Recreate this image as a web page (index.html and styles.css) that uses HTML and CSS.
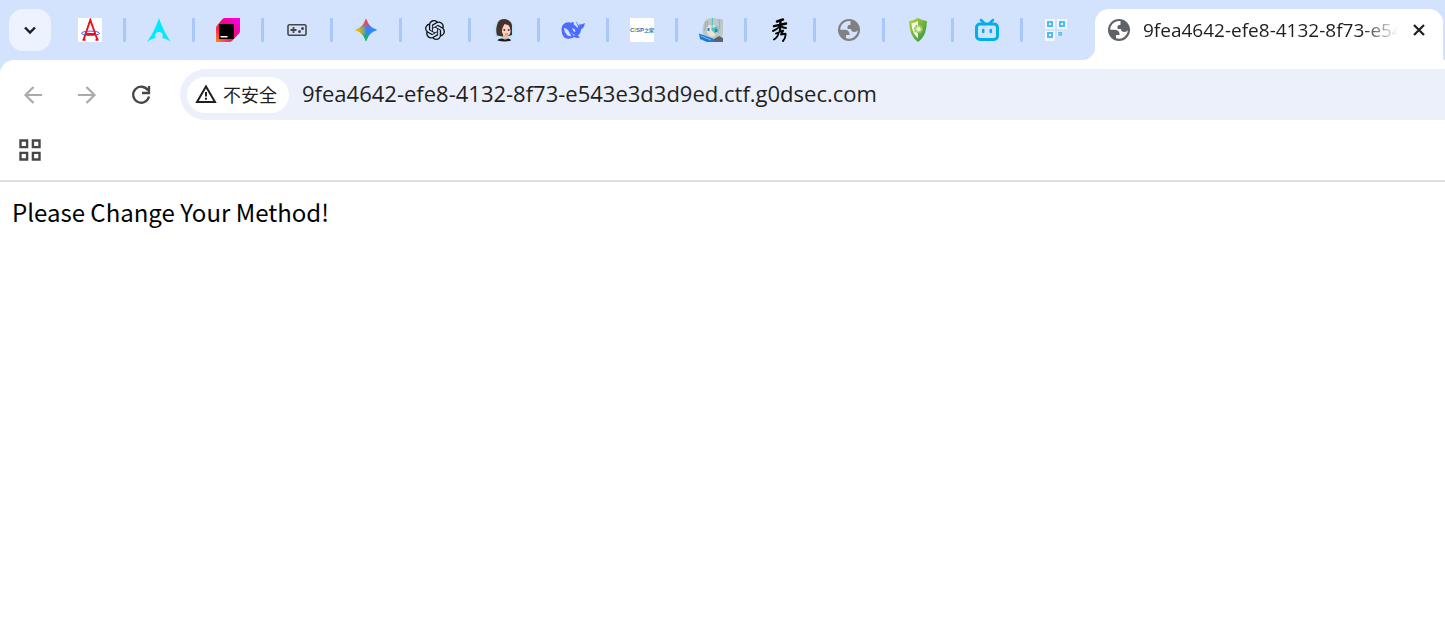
FILE: index.html
```html
<!DOCTYPE html>
<html lang="zh-CN">
<head>
<meta charset="utf-8">
<title>9fea4642-efe8-4132-8f73-e543e3d3d9ed.ctf.g0dsec.com</title>
<link rel="stylesheet" href="styles.css">
</head>
<body>
<svg class="defs" aria-hidden="true">
  <symbol id="globe" viewBox="0 0 24 24">
    <circle cx="12" cy="12" r="11" fill="currentColor"/>
    <path fill="var(--sea)" d="M13.500 3Q8 2.500 5 6.500 3 9 3.200 11.800H7.500Q12 12 12.500 15.500V17H9V20.300Q15.500 22 19.200 16.800 20.600 14.800 20.900 12.300 19.800 13.800 17.500 14 14 14 14 11H10.500V8.500Q10.500 7 13.500 6.800Z"/>
  </symbol>
</svg>
<header class="browser">
  <div class="strip">
    <button class="search" aria-label="搜索标签页"><svg viewBox="0 0 14 14" width="14" height="14"><path d="M2 4.500 7 9.500 12 4.500" fill="none" stroke="#1b1c20" stroke-width="2.400"/></svg></button>
    <nav class="tabs">
      <a class="tab" href="#" aria-label="Tab 1"><svg class="icon" viewBox="0 0 24 24"><path fill="#fff" d="M0 0h24v24H0z"/><path d="M5.500 22 12.300 2 19.500 22M8 16h9M4.500 21.800h3M17.500 21.800h3" fill="none" stroke="#f10b12" stroke-width="1.900"/><ellipse cx="12.500" cy="15.300" rx="9" ry="2.200" fill="none" stroke="#5454dc" stroke-width="1"/></svg></a>
      <a class="tab" href="#" aria-label="Tab 2"><svg class="icon" viewBox="0 0 24 24"><path fill="#00eaff" d="M12 0c2.300 7 6 15.500 12 24-3.500-2.700-6-3.500-8.500-4 1-4-.8-6-3.500-6s-4.500 2-3.500 6C6 20.500 3.500 21.300 0 24 6 15.500 9.700 7 12 0Z"/></svg></a>
      <a class="tab" href="#" aria-label="Tab 3"><svg class="icon" viewBox="0 0 24 24"><defs><linearGradient id="jb" x1="0" y1="1" x2="1" y2="0"><stop offset="0" stop-color="#ff8a12"/><stop offset=".3" stop-color="#ff2857"/><stop offset=".55" stop-color="#f80085"/><stop offset="1" stop-color="#f500ff"/></linearGradient></defs><path fill="url(#jb)" d="M9 0h15v13q0 1.500-1 2.500l-7 7.500q-1 1-2.500 1H0V10q0-1.500 1-2.500L6.500 1Q7.500 0 9 0Z"/><path d="M3 6h15v15H3z"/><path fill="#fff" d="M4.500 18h7v1.500h-7z"/></svg></a>
      <a class="tab" href="#" aria-label="Tab 4"><svg class="icon" viewBox="0 0 24 24"><rect x="3" y="6.700" width="18" height="10.600" rx="1.500" fill="none" stroke="#474747" stroke-width="1.600"/><path d="M8.500 9v6M5.500 12h6" stroke="#474747" stroke-width="1.800"/><circle cx="14.500" cy="13.400" r="1.500" fill="#474747"/><circle cx="17.500" cy="10.600" r="1.500" fill="#474747"/></svg></a>
      <a class="tab" href="#" aria-label="Tab 5"><svg class="icon" viewBox="0 0 24 24"><defs><linearGradient id="g1" x1="0" y1="0" x2="1" y2="0"><stop offset=".05" stop-color="#fbbc04"/><stop offset=".38" stop-color="#90a85e"/><stop offset=".52" stop-color="#3186ff"/></linearGradient><linearGradient id="g2" x1="0" y1="0" x2="0" y2="1"><stop offset=".08" stop-color="#f9434d"/><stop offset=".25" stop-color="#f9434d" stop-opacity=".7"/><stop offset=".45" stop-color="#3186ff" stop-opacity="0"/><stop offset=".62" stop-color="#08b962" stop-opacity="0"/><stop offset=".85" stop-color="#08b962"/></linearGradient></defs><path fill="url(#g1)" stroke="url(#g1)" stroke-width=".8" d="M12 1.500Q14.500 9.500 22.500 12 14.500 14.500 12 22.500 9.500 14.500 1.500 12 9.500 9.500 12 1.500Z"/><path fill="url(#g2)" stroke="url(#g2)" stroke-width=".8" d="M12 1.500Q14.500 9.500 22.500 12 14.500 14.500 12 22.500 9.500 14.500 1.500 12 9.500 9.500 12 1.500Z"/></svg></a>
      <a class="tab" href="#" aria-label="Tab 6"><svg class="icon knot" viewBox="0 0 24 24"><path fill="#0c1116" d="M22.282 9.821a5.985 5.985 0 0 0-.516-4.911 6.046 6.046 0 0 0-6.510-2.900A6.065 6.065 0 0 0 4.981 4.182a5.985 5.985 0 0 0-3.998 2.900 6.046 6.046 0 0 0 .743 7.097 5.980 5.980 0 0 0 .511 4.911 6.051 6.051 0 0 0 6.515 2.900A5.985 5.985 0 0 0 13.260 24a6.056 6.056 0 0 0 5.772-4.206 5.990 5.990 0 0 0 3.998-2.900 6.056 6.056 0 0 0-.748-7.073zM13.260 22.430a4.476 4.476 0 0 1-2.876-1.040l.141-.081 4.779-2.758a.795.795 0 0 0 .393-.681v-6.737l2.020 1.169a.071.071 0 0 1 .038.052v5.583a4.504 4.504 0 0 1-4.495 4.493zM3.600 18.304a4.471 4.471 0 0 1-.535-3.014l.142.085 4.783 2.759a.771.771 0 0 0 .781 0l5.843-3.369v2.332a.080.080 0 0 1-.033.062L9.740 19.950a4.499 4.499 0 0 1-6.140-1.646zM2.341 7.896a4.485 4.485 0 0 1 2.366-1.973V11.600a.766.766 0 0 0 .388.677l5.814 3.354-2.020 1.169a.076.076 0 0 1-.071 0l-4.830-2.787A4.504 4.504 0 0 1 2.341 7.872zm16.597 3.855-5.833-3.387L15.119 7.200a.076.076 0 0 1 .071 0l4.830 2.791a4.494 4.494 0 0 1-.676 8.105v-5.678a.790.790 0 0 0-.406-.667zm2.010-3.023-.141-.085-4.774-2.782a.776.776 0 0 0-.785 0L9.409 9.230V6.897a.066.066 0 0 1 .028-.061l4.830-2.787a4.499 4.499 0 0 1 6.681 4.660zM8.307 12.863l-2.020-1.164a.080.080 0 0 1-.038-.057V6.075a4.499 4.499 0 0 1 7.376-3.454l-.142.081-4.778 2.758a.795.795 0 0 0-.393.682zm1.097-2.366 2.602-1.500 2.607 1.500v3l-2.597 1.500-2.607-1.500z"/></svg></a>
      <a class="tab" href="#" aria-label="Tab 7"><svg class="icon" viewBox="0 0 24 24"><circle cx="12" cy="12" r="11" fill="#bfe5f5"/><path d="M8 2q4-2 8 0 4 2 4 6v9l-7 2-8-1.500Q3.500 12 5 7 5.500 3.500 8 2Z" fill="#44322f"/><path d="M12.500 6q-3 5-2.500 8 1 4 4 4.500 4-.5 4.500-4.500.5-5-2.500-7-2-.5-3.500-1Z" fill="#ffd2bd"/><path d="M11 17h5v4h-5z" fill="#efb8a6"/><path d="M5.500 22.500Q6 20.500 10.500 20.500q2.500 2 5.500 0 3 .5 3 2-6 2-13.500 0Z" fill="#15171c"/><circle cx="12.300" cy="12" r="1" fill="#4b302d"/><circle cx="16.700" cy="12" r="1" fill="#4b302d"/><path d="M13 16h3" stroke="#db5a5a"/></svg></a>
      <a class="tab" href="#" aria-label="Tab 8"><svg class="icon" viewBox="0 0 24 24"><path fill="#4d6bfe" d="M15.500 3.300Q16.500 7 18.500 8.200 18 4.500 19.300 6.200 20 7 23.800 5 23.600 9.700 20.300 11 20 15 16.800 17.700q1.700.8 2 1.800-2.800 1-5.500-.5-5.500 3.500-10.300.3Q.5 16.500.5 11.500.5 7 4.500 4.800q3-1.300 6 0Q12 3.500 13 4.700l-.5 1.500q3 2 4.200 4 .6-2-.3-3.200-1.500-1.700-.9-3.700Z"/><path fill="#d3e3fd" d="M2.800 10Q3.300 14.500 6 17q2 1.800 4.500 1-1.500-2-2.500-4.500-2-3.500-5.200-3.500ZM11 10.500q1 2.500 3 3.800.8-1.300-.2-2.800-1-1.300-2.800-1ZM10 14q1.500 2.500 4 3l-1 .8q-2-1-3-3.800Z"/></svg></a>
      <a class="tab" href="#" aria-label="Tab 9"><span class="cisp"><b>C<i>I</i>SP</b><em>之家</em></span></a>
      <a class="tab" href="#" aria-label="Tab 10"><svg class="icon" viewBox="0 0 24 24"><path fill="#bdc8ca" d="M8 1q6-2 11 0h5v15l-2 6H7Q3 17 3.500 11 4 4 8 1Z"/><path fill="#f0dfda" d="M8 8q5-2 9 0l1 5q-1 5-5 6-4-1-5-5Z"/><path fill="#42c5c3" d="M13 0h1l-.500 10 5-2v4l-2 4-4-4Z"/><path d="M20 1q2 7-1 14M7 3 5.500 13M9 3 8 9" stroke="#98acaf" fill="none"/><path fill="#3381ac" d="M8.500 10h2v3h-2zM16 11h2.500v3H16z"/><path fill="#207bd5" d="M0 15.500 7 18l8 3 1 3H8l-7-3Z"/><path fill="#596372" d="m15 21 5-3 4 2v4h-9Z"/><path d="m2 18 10 4" stroke="#60c9f2"/></svg></a>
      <a class="tab" href="#" aria-label="Tab 11"><svg class="icon" viewBox="0 0 24 24"><g fill="none" stroke="#050505" stroke-linecap="round" stroke-linejoin="round"><path stroke-width="2.400" d="M15 1.500 9 3.500M6 8.200 18 5.500M12.500 3 12 13"/><path stroke-width="1.900" d="M12 8Q9 11.500 5 13M13 8q2 2 5 2M8 15.500 15 12.500M10.500 15Q10 19 6 21.500M15 13l-2 3.500 4.500-.8q.5 4-2.500 7.300"/></g></svg></a>
      <a class="tab muted" href="#" aria-label="Tab 12"><svg class="icon"><use href="#globe"/></svg></a>
      <a class="tab" href="#" aria-label="Tab 13"><svg class="icon" viewBox="0 0 24 24"><defs><linearGradient id="sh" x1="0" y1="0" x2="1" y2="1"><stop stop-color="#b9d832"/><stop offset="1" stop-color="#239248"/></linearGradient></defs><path fill="url(#sh)" d="M12 0q4 2.500 9 3-.3 7-1.800 11.500Q17 20.500 12 24q-5-3.500-7.200-9.500Q3.300 10 3 3q5-.5 9-3Z"/><path fill="#f5fbe9" d="M12 3v17.500Q5.800 15 5.500 5.300 9 5 12 3Z"/><circle cx="12.500" cy="11" r="3.500" fill="#d5e8a8" stroke="#8fc456" stroke-width="2.200" stroke-dasharray="1.800 .8"/><circle cx="12.500" cy="11" r="1.700" fill="#edf7cc"/></svg></a>
      <a class="tab" href="#" aria-label="Tab 14"><svg class="icon" viewBox="0 0 24 24"><g fill="none" stroke="#00aeec" stroke-linecap="round"><rect x="1.500" y="6" width="21" height="15.500" rx="3.500" stroke-width="3"/><path stroke-width="2.500" d="m6 2 3 3M18 2l-3 3M8.200 12v2M15.800 12v2"/></g></svg></a>
      <a class="tab" href="#" aria-label="Tab 15"><svg class="icon" viewBox="0 0 24 24"><path fill="#f3f7ff" d="M1 1h10v10H1zM13 1h10v10H13zM1 13h10v10H1zM13 13h6v5h-6z"/><path fill="none" stroke="#4fbdf1" stroke-width="2" d="M4 4h4v4H4zM16 4h4v4h-4zM4 15h4v4H4z"/><path fill="none" stroke="#4fbdf1" stroke-width="1.500" d="M15 14.500h2.500V17H15z"/></svg></a>
    </nav>
    <div class="active">
      <svg class="icon" aria-hidden="true"><use href="#globe"/></svg>
      <span class="title">9fea4642-efe8-4132-8f73-e54</span>
      <button class="close" aria-label="关闭"><svg viewBox="0 0 14 14" width="14" height="14"><path d="m2 2 10 10M12 2 2 12" stroke="#1f1f1f" stroke-width="2.200"/></svg></button>
    </div>
  </div>
  <div class="toolbar">
    <div class="nav">
      <button aria-label="后退" disabled><svg class="icon" viewBox="0 0 24 24"><path d="M21 12H4.500M12.500 4 4.500 12l8 8" fill="none" stroke="#ababab" stroke-width="2.200"/></svg></button>
      <button aria-label="前进" disabled><svg class="icon" viewBox="0 0 24 24"><path d="M3 12h16.500M11.500 4l8 8-8 8" fill="none" stroke="#ababab" stroke-width="2.200"/></svg></button>
      <button aria-label="重新加载"><svg class="icon" viewBox="0 0 24 24"><path d="M19 7.500A8 8 0 1 0 20 13.500M20 3v7h-7" fill="none" stroke="#474747" stroke-width="2.300"/></svg></button>
    </div>
    <div class="omnibox">
      <button class="chip"><svg viewBox="0 0 22 20" width="22" height="20"><path d="M11 2.500 20 18H2Z" fill="none" stroke="#1f1f1f" stroke-width="2"/><path d="M11 8v4.500M11 13.800v2" stroke="#1f1f1f" stroke-width="2"/></svg>不安全</button>
      <input class="url" type="text" aria-label="地址" value="9fea4642-efe8-4132-8f73-e543e3d3d9ed.ctf.g0dsec.com">
    </div>
  </div>
  <div class="bookmarks">
    <button aria-label="应用"><svg class="icon" viewBox="0 0 24 24"><path d="M2.500 2.500h6.600v6.600H2.500zM14.900 2.500h6.600v6.600h-6.600zM2.500 14.900h6.600v6.600H2.500zM14.900 14.900h6.600v6.600h-6.600z" fill="none" stroke="#474747" stroke-width="2.400"/></svg></button>
  </div>
</header>
<main class="page">Please Change Your Method!</main>
</body>
</html>
```
FILE: styles.css
```css
* { box-sizing: border-box; }
body { margin: 0; background: #fff; color: #000; font-family: "Noto Sans CJK SC", sans-serif; overflow-x: hidden; }
button { border: 0; padding: 0; background: none; display: flex; align-items: center; justify-content: center; font: inherit; color: #1f1f1f; }
svg { display: block; flex: none; }
.defs { display: none; }
.icon { width: 24px; height: 24px; }
.browser { background: #d3e3fd; }
.strip { display: flex; height: 60px; padding: 9px 2px 0 9px; }
.search { width: 42px; height: 42px; border-radius: 14px; background: #ecf2fe; }
.tabs { display: flex; margin-left: 6px; height: 42px; }
.tab { width: 69px; display: flex; align-items: center; justify-content: space-between; padding-left: 21px; text-decoration: none; }
.tab::after { content: ""; width: 3px; height: 24px; border-radius: 1px; background: #a8c7fa; }
.tab:last-child::after { background: none; }
.muted { color: #808080; --sea: #d3e3fd; }
.knot { padding: 2px; }
.cisp { width: 24px; height: 24px; background: #fff; display: flex; align-items: center; justify-content: center; white-space: nowrap; font: 6px/8px "Liberation Sans", "Noto Sans CJK SC", sans-serif; color: #2277b5; }
.cisp i { font-style: normal; color: #8cc63f; }
.cisp em { font-style: normal; font-weight: 700; font-size: 5px; }
.active { position: relative; flex: 1; min-width: 0; margin-left: 3px; display: flex; align-items: center; padding: 0 17px 9px 12px; background: #fff; border-radius: 14px 14px 0 0; color: #5f6368; --sea: #fff; }
.active::before { content: ""; position: absolute; right: 100%; bottom: 0; width: 14px; height: 14px; background: radial-gradient(circle at 0 0, #d3e3fd 14px, #fff 15px); }
.title { flex: 1; min-width: 0; margin: 0 14px 0 12px; overflow: hidden; white-space: nowrap; font: 19px/28px "Open Sans", sans-serif; color: #1f1f1f; mask-image: linear-gradient(to right, #000 calc(100% - 36px), transparent); }
.toolbar { display: flex; align-items: center; padding-top: 9px; background: #fff; border-top-left-radius: 14px; }
.nav { display: flex; gap: 30px; padding: 0 27px 0 21px; }
.omnibox { flex: 1; display: flex; align-items: center; height: 51px; padding-left: 7px; background: #ecf0fa; border-radius: 26px 0 0 26px; }
.chip { width: 102px; height: 36px; gap: 6px; padding: 0 4px 2px 0; border-radius: 18px; background: #fff; font-size: 18px; line-height: 24px; }
.url { flex: 1; min-width: 0; margin-left: 13px; padding: 0 0 3px; border: 0; outline: 0; background: none; font: 22px/30px "Open Sans", sans-serif; color: #1f1f1f; }
.bookmarks { height: 62px; padding: 18px; background: #fff; border-bottom: 2px solid #e0e0e0; }
.page { padding: 12px; font-size: 24px; line-height: 36px; }
```
